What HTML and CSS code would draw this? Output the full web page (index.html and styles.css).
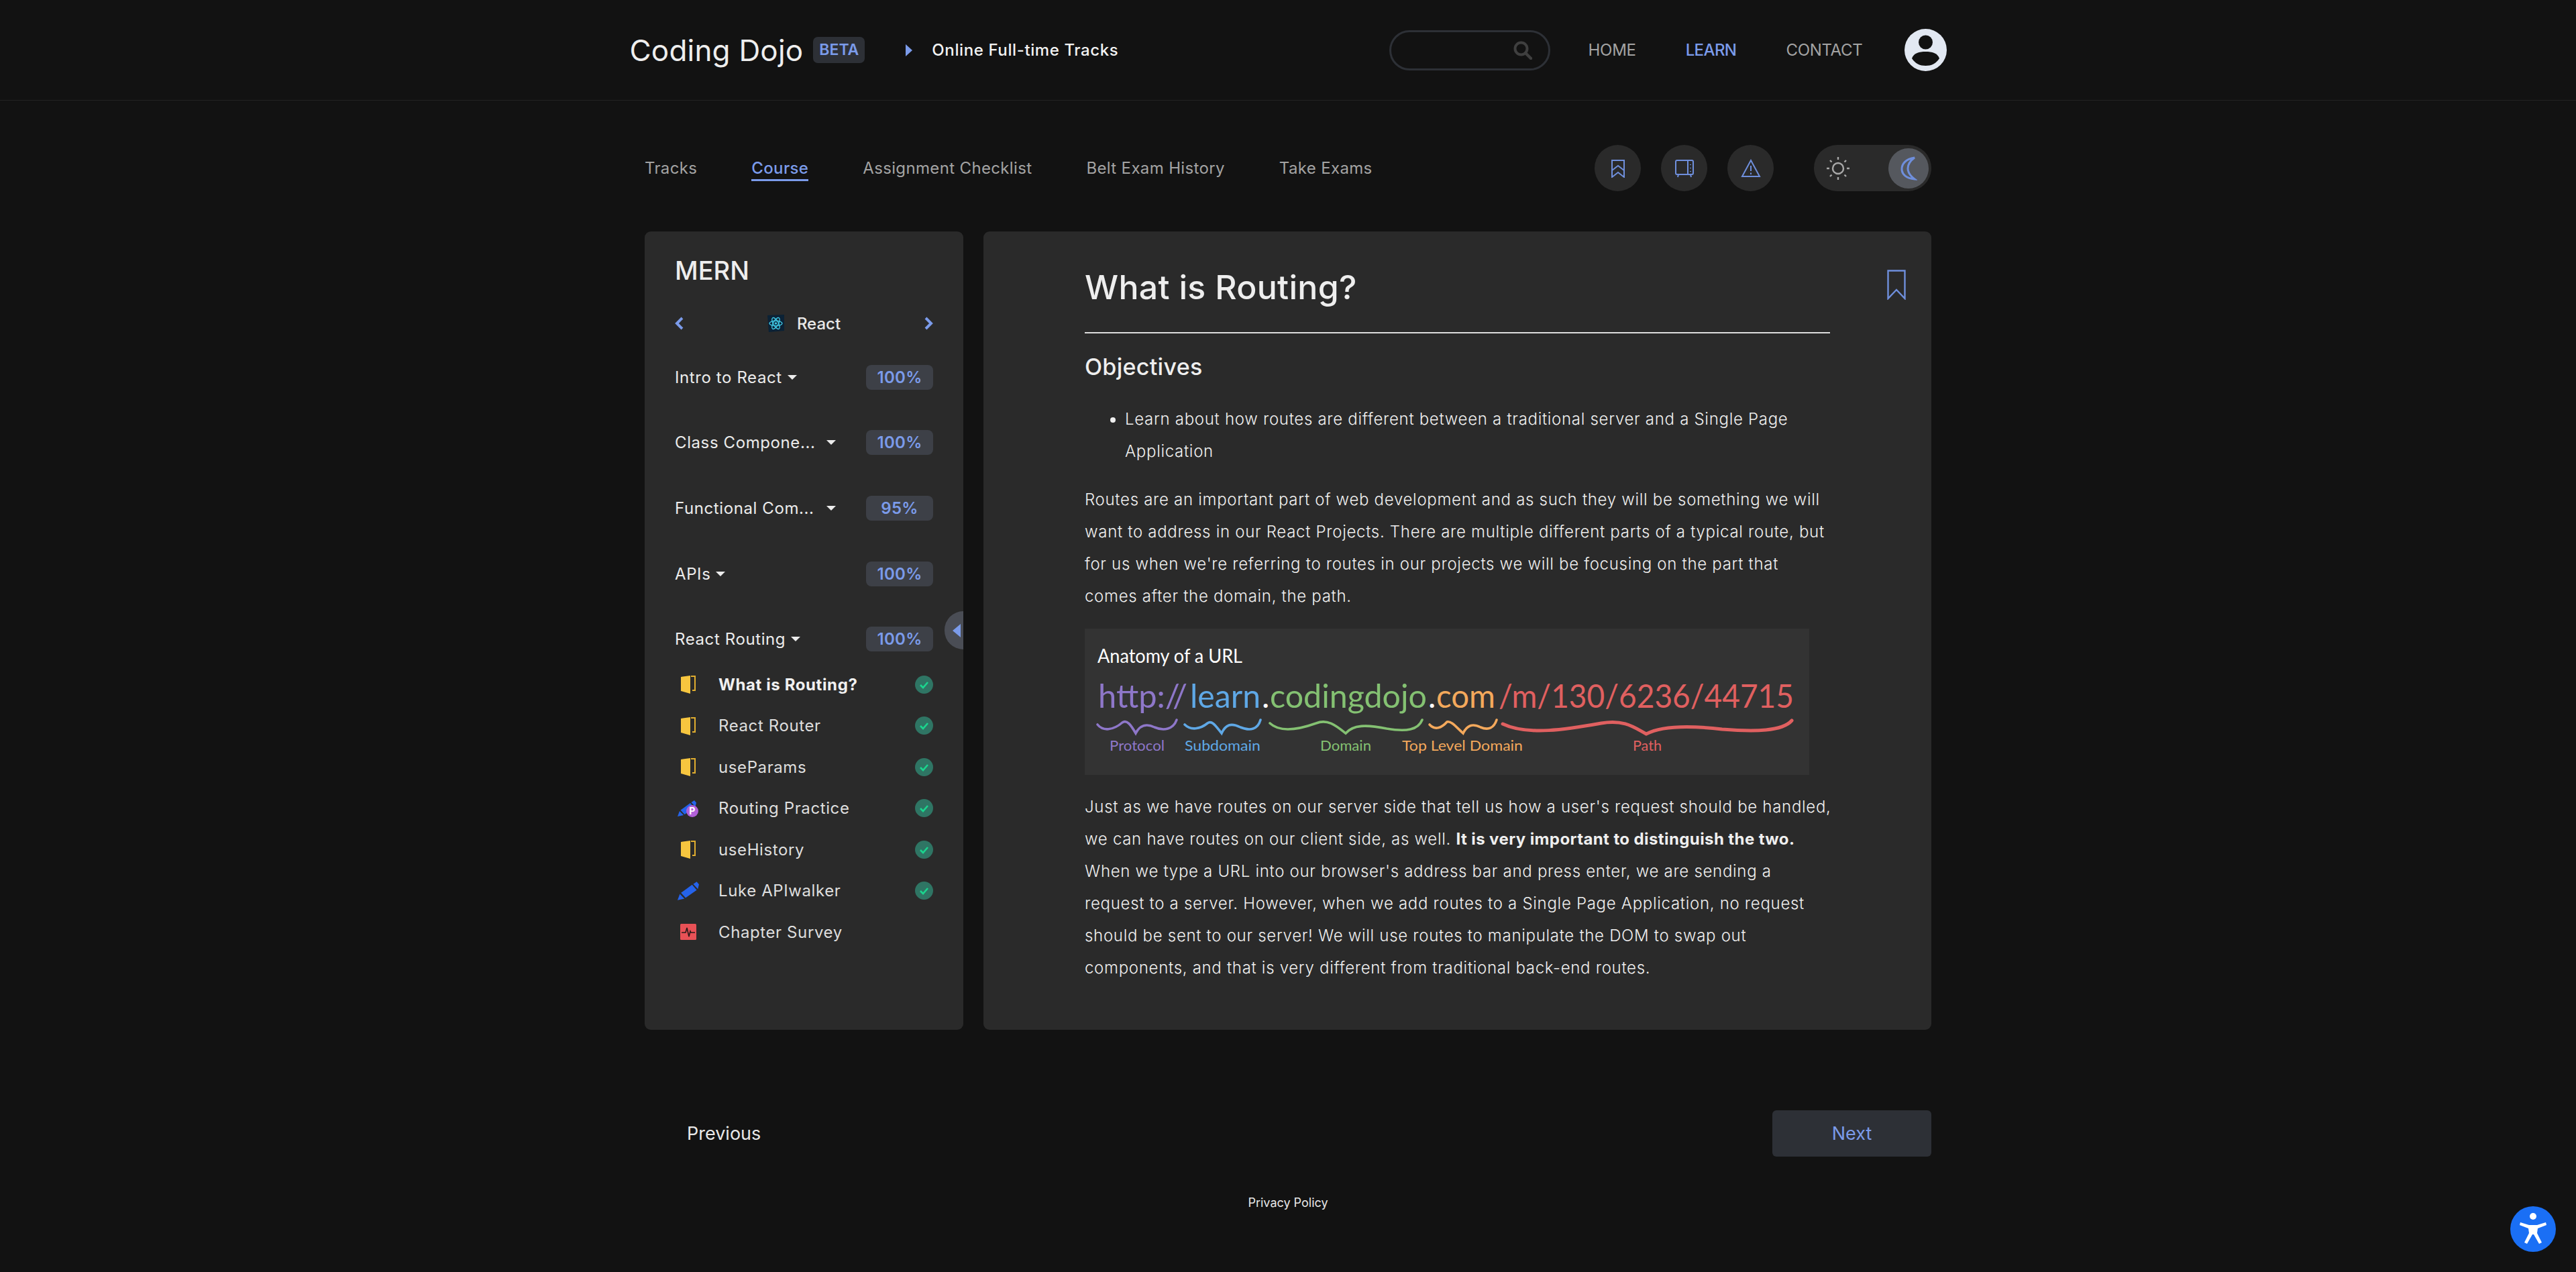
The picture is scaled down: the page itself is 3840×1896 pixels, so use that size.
FILE: index.html
```html
<!DOCTYPE html>
<html>
<head>
    <title>What is Routing? - Coding Dojo</title>
    <link rel="stylesheet" href="styles.css">
</head>
<body>
    <svg class="icon-defs" width="0" height="0">
        <defs>
            <symbol id="book" viewBox="0 0 22 28">
                <path d="M0 3 L14 1 V28 L0 24 Z" fill="#f7c63f"/>
                <path d="M15 2 H21 V23 H17" fill="none" stroke="#e0ad2f" stroke-width="2"/>
            </symbol>
            <symbol id="pencil" viewBox="0 0 28 24">
                <path d="M0 24 L3 16 L9 22 Z" fill="#2563eb"/>
                <path d="M4.5 14.5 L19 4 L25 11 L10.5 21 Z" fill="#2563eb"/>
                <path d="M20.5 3 L25 0 L28 3.5 L26.5 9.5 Z" fill="#2563eb"/>
            </symbol>
            <symbol id="check" viewBox="0 0 27 27">
                <circle cx="13.5" cy="13.5" r="13.5" fill="#2f7564"/>
                <path d="M8 14 L12 18 L19 10" fill="none" stroke="#1bd58e" stroke-width="2.6"/>
            </symbol>
        </defs>
    </svg>

    <header class="site-header">
        <div class="header-inner">
            <div class="brand">
                <span class="brand-name">Coding Dojo</span>
                <span class="beta">BETA</span>
                <span class="crumb-arrow"></span>
                <span class="crumb">Online Full-time Tracks</span>
            </div>
            <div class="search">
                <svg class="search-icon" viewBox="0 0 28 28">
                    <circle cx="11.5" cy="11.5" r="9" fill="none" stroke="#3f3f3f" stroke-width="4"/>
                    <path d="M18 18 L26 26" stroke="#3f3f3f" stroke-width="4.5" stroke-linecap="round"/>
                </svg>
            </div>
            <nav class="main-nav">
                <a href="#">HOME</a>
                <a href="#" class="active">LEARN</a>
                <a href="#">CONTACT</a>
            </nav>
            <svg class="avatar" viewBox="0 0 63 63">
                <circle cx="31.5" cy="31.5" r="31.5" fill="#e2e8f2"/>
                <circle cx="31.5" cy="20" r="10.5" fill="#121212"/>
                <path d="M11 44 C14 36 22 34 31.5 34 C41 34 49 36 52 44 C47 52 40 55 31.5 55 C23 55 16 52 11 44 Z" fill="#121212"/>
            </svg>
        </div>
    </header>

    <div class="page">
        <div class="sub-nav">
            <a href="#">Tracks</a>
            <a href="#" class="active">Course</a>
            <a href="#">Assignment Checklist</a>
            <a href="#">Belt Exam History</a>
            <a href="#">Take Exams</a>
            <div class="tools">
                <button class="round-btn">
                    <svg viewBox="0 0 24 28" width="24" height="28" fill="none" stroke="#6f8fdc" stroke-width="2">
                        <path d="M3 2 H21 V27 L12 20 L3 27 Z"/>
                        <path d="M3 17 L12 10 L21 17"/>
                    </svg>
                </button>
                <button class="round-btn">
                    <svg viewBox="0 0 30 28" width="30" height="28" fill="none" stroke="#6f8fdc" stroke-width="2">
                        <rect x="2" y="2" width="26" height="21" rx="2"/>
                        <path d="M20 2 V23 M24 8 V9 M24 13 V14 M24 18 V19 M6 23 L5 27 M24 23 L25 27"/>
                    </svg>
                </button>
                <button class="round-btn">
                    <svg viewBox="0 0 30 28" width="30" height="28" fill="none" stroke="#6f8fdc" stroke-width="2">
                        <path d="M15 2 L28 26 H2 Z"/>
                        <path d="M15 10 V18 M15 20.5 V23"/>
                    </svg>
                </button>
            </div>
            <div class="theme-toggle">
                <svg class="sun" viewBox="0 0 36 36" width="36" height="36" fill="none" stroke="#a8a8a8" stroke-width="2.4">
                    <circle cx="18" cy="18" r="8"/>
                    <path d="M18 1 V5 M18 31 V35 M1 18 H5 M31 18 H35 M6 6 L8.5 8.5 M27.5 27.5 L30 30 M6 30 L8.5 27.5 M27.5 8.5 L30 6"/>
                </svg>
                <span class="toggle-thumb">
                    <svg viewBox="0 0 26 36" width="26" height="36" fill="none" stroke="#6f8fdc" stroke-width="3">
                        <path d="M22 2 C8 4 3 12 3 19 C3 27 10 33 22 34 C14 28 12 23 12 18 C12 12 15 7 22 2 Z"/>
                    </svg>
                </span>
            </div>
        </div>

        <div class="panels">
            <aside class="sidebar">
                <h2 class="track-title">MERN</h2>
                <div class="course-switch">
                    <svg class="chev" viewBox="0 0 14 20"><path d="M11 2 L3 10 L11 18"/></svg>
                    <span class="course-name">
                        <svg viewBox="0 0 25 26" width="25" height="26">
                            <path d="M0 1 L25 0 V24 L2 26 Z" fill="#0b2236"/>
                            <g fill="none" stroke="#3fc4e0" stroke-width="1.4">
                                <ellipse cx="12.5" cy="13" rx="9.5" ry="3.8"/>
                                <ellipse cx="12.5" cy="13" rx="9.5" ry="3.8" transform="rotate(60 12.5 13)"/>
                                <ellipse cx="12.5" cy="13" rx="9.5" ry="3.8" transform="rotate(120 12.5 13)"/>
                            </g>
                            <circle cx="12.5" cy="13" r="1.8" fill="#3fc4e0"/>
                        </svg>
                        React
                    </span>
                    <svg class="chev" viewBox="0 0 14 20"><path d="M3 2 L11 10 L3 18"/></svg>
                </div>
                <div class="chapters">
                    <div class="chapter"><span class="chapter-name">Intro to React</span><span class="caret"></span><span class="percent">100%</span></div>
                    <div class="chapter"><span class="chapter-name cut">Class Compone...</span><span class="caret"></span><span class="percent">100%</span></div>
                    <div class="chapter"><span class="chapter-name cut">Functional Com...</span><span class="caret"></span><span class="percent">95%</span></div>
                    <div class="chapter"><span class="chapter-name">APIs</span><span class="caret"></span><span class="percent">100%</span></div>
                    <div class="chapter"><span class="chapter-name">React Routing</span><span class="caret"></span><span class="percent">100%</span></div>
                </div>
                <ul class="lessons">
                    <li class="current">
                        <svg class="lesson-icon"><use href="#book"/></svg>
                        <span class="lesson-name">What is Routing?</span>
                        <svg class="done"><use href="#check"/></svg>
                    </li>
                    <li>
                        <svg class="lesson-icon"><use href="#book"/></svg>
                        <span class="lesson-name">React Router</span>
                        <svg class="done"><use href="#check"/></svg>
                    </li>
                    <li>
                        <svg class="lesson-icon"><use href="#book"/></svg>
                        <span class="lesson-name">useParams</span>
                        <svg class="done"><use href="#check"/></svg>
                    </li>
                    <li>
                        <svg class="lesson-icon" viewBox="0 0 32 28">
                            <use href="#pencil" y="2" width="28" height="24"/>
                            <circle cx="22" cy="18" r="9" fill="#b160d8"/>
                            <text x="22" y="23" class="practice-p">P</text>
                        </svg>
                        <span class="lesson-name">Routing Practice</span>
                        <svg class="done"><use href="#check"/></svg>
                    </li>
                    <li>
                        <svg class="lesson-icon"><use href="#book"/></svg>
                        <span class="lesson-name">useHistory</span>
                        <svg class="done"><use href="#check"/></svg>
                    </li>
                    <li>
                        <svg class="lesson-icon"><use href="#pencil"/></svg>
                        <span class="lesson-name">Luke APIwalker</span>
                        <svg class="done"><use href="#check"/></svg>
                    </li>
                    <li>
                        <svg class="lesson-icon" viewBox="0 0 32 28">
                            <rect x="4" y="2" width="24" height="24" rx="1.5" fill="#e85156"/>
                            <path d="M6 15 H12 L14 8 L17 21 L19 13 L20 15 H26" fill="none" stroke="#2a1a1a" stroke-width="1.6"/>
                        </svg>
                        <span class="lesson-name">Chapter Survey</span>
                    </li>
                </ul>
                <span class="collapse-handle"><span class="collapse-arrow"></span></span>
            </aside>

            <main class="lesson">
                <svg class="lesson-bookmark" viewBox="0 0 28 45" fill="none" stroke="#6f8fdc" stroke-width="2.4">
                    <path d="M1.5 1.5 H26.5 V43 L14 30 L1.5 43 Z"/>
                </svg>
                <h1>What is Routing?</h1>
                <h3>Objectives</h3>
                <ul>
                    <li>Learn about how routes are different between a traditional server and a Single Page<br>Application</li>
                </ul>
                <p>Routes are an important part of web development and as such they will be something we will<br>
                want to address in our React Projects. There are multiple different parts of a typical route, but<br>
                for us when we're referring to routes in our projects we will be focusing on the part that<br>
                comes after the domain, the path.</p>
                <svg class="url-figure" viewBox="0 0 1080 218" width="1080" height="218">
                    <rect width="1080" height="218" fill="#333333"/>
                    <text x="19" y="51" class="fig-title" textLength="216" lengthAdjust="spacingAndGlyphs">Anatomy of a URL</text>
                    <g class="fig-url">
                        <text x="20" y="118" fill="#8e77c9" textLength="133" lengthAdjust="spacingAndGlyphs">http://</text>
                        <text x="157" y="118" fill="#5fa8e6" textLength="105" lengthAdjust="spacingAndGlyphs">learn</text>
                        <text x="264" y="118" fill="#ffffff">.</text>
                        <text x="276" y="118" fill="#84c172" textLength="234" lengthAdjust="spacingAndGlyphs">codingdojo</text>
                        <text x="512" y="118" fill="#ffffff">.</text>
                        <text x="524" y="118" fill="#f4a95c" textLength="88" lengthAdjust="spacingAndGlyphs">com</text>
                        <text x="617" y="118" fill="#e06060" textLength="440" lengthAdjust="spacingAndGlyphs">/m/130/6236/44715</text>
                    </g>
                    <g fill="none" stroke-width="3.6" stroke-linecap="round">
                        <path stroke="#8e77c9" d="M19 143 C27 153 42 152 56 140 C63 135 69 144 76 156 C82 144 92 141 104 147 C118 153 132 150 137 136"/>
                        <path stroke="#5fa8e6" d="M149 143 C158 152 172 150 183 141 C190 136 196 146 204 156 C210 143 218 140 232 147 C247 153 258 150 262 136"/>
                        <path stroke="#84c172" d="M276 141 C292 156 320 150 345 141 C362 134 375 145 389 156 C400 143 420 143 450 149 C480 154 497 151 503 136"/>
                        <path stroke="#f4a95c" d="M514 143 C522 152 532 148 540 139 C546 137 554 147 564 156 C570 144 578 141 590 147 C602 152 610 148 614 136"/>
                        <path stroke="#e06060" stroke-width="5" d="M623 142 C660 160 720 150 770 141 C805 135 820 148 837 157 C860 145 900 144 950 150 C1000 154 1040 153 1054 137"/>
                    </g>
                    <g class="fig-label">
                        <text x="37" y="182" fill="#8e77c9" textLength="82" lengthAdjust="spacingAndGlyphs">Protocol</text>
                        <text x="149" y="182" fill="#5fa8e6" textLength="113" lengthAdjust="spacingAndGlyphs">Subdomain</text>
                        <text x="351" y="182" fill="#84c172" textLength="76" lengthAdjust="spacingAndGlyphs">Domain</text>
                        <text x="473" y="182" fill="#f4a95c" textLength="180" lengthAdjust="spacingAndGlyphs">Top Level Domain</text>
                        <text x="817" y="182" fill="#e06060" textLength="43" lengthAdjust="spacingAndGlyphs">Path</text>
                    </g>
                </svg>
                <p>Just as we have routes on our server side that tell us how a user's request should be handled,<br>
                we can have routes on our client side, as well. <strong>It is very important to distinguish the two.</strong><br>
                When we type a URL into our browser's address bar and press enter, we are sending a<br>
                request to a server. However, when we add routes to a Single Page Application, no request<br>
                should be sent to our server! We will use routes to manipulate the DOM to swap out<br>
                components, and that is very different from traditional back-end routes.</p>
            </main>
        </div>

        <div class="pager">
            <a href="#" class="prev">Previous</a>
            <a href="#" class="next">Next</a>
        </div>
    </div>

    <footer class="site-footer"><a href="#">Privacy Policy</a></footer>

    <button class="a11y-btn">
        <svg viewBox="0 0 68 68" width="68" height="68">
            <circle cx="34" cy="34" r="34" fill="#1a6ff5"/>
            <circle cx="34" cy="15" r="5" fill="#ffffff"/>
            <path d="M15 24 L28 28 H40 L53 24 L54 28 L41 33 L40 40 L47 54 L43 56 L35 42 H33 L25 56 L21 54 L28 40 L27 33 L14 28 Z" fill="#ffffff"/>
        </svg>
    </button>
</body>
</html>
```

FILE: styles.css
```css
body {
    margin: 0;
    background-color: #121212;
    color: #e8e8e8;
    font-family: Inter, "Noto Sans", sans-serif;
    font-size: 24px;
}

a {
    color: inherit;
    text-decoration: none;
}

button {
    border: none;
    padding: 0;
    cursor: pointer;
}

.icon-defs {
    display: block;
    height: 0;
}

/* top bar */
.site-header {
    border-bottom: 1px solid #222222;
}

.header-inner {
    display: flex;
    align-items: center;
    width: 1963px;
    height: 149px;
    margin: 0 auto;
}

.brand {
    display: flex;
    align-items: center;
    flex: 1;
}

.brand-name {
    font-size: 44px;
    letter-spacing: 0.2px;
    color: #eeeeee;
}

.beta {
    margin-left: 15px;
    padding: 0 9px;
    height: 39px;
    line-height: 39px;
    background-color: #2d3036;
    border-radius: 7px;
    color: #7b9bea;
    font-size: 23px;
    font-weight: 600;
}

.crumb-arrow {
    margin-left: 61px;
    border-left: 10px solid #7b9bea;
    border-top: 9px solid transparent;
    border-bottom: 9px solid transparent;
}

.crumb {
    margin-left: 29px;
    font-size: 24px;
    font-weight: 500;
    letter-spacing: 0.6px;
    color: #f2f2f2;
}

.search {
    display: flex;
    align-items: center;
    justify-content: flex-end;
    box-sizing: border-box;
    width: 240px;
    height: 60px;
    padding-right: 24px;
    border: 3px solid #2d3036;
    border-radius: 30px;
}

.search-icon {
    width: 28px;
    height: 28px;
}

.main-nav {
    display: flex;
    gap: 74px;
    margin-left: 57px;
    color: #a3a3a3;
    font-size: 24px;
    letter-spacing: -0.3px;
}

.main-nav .active {
    color: #7b9bea;
    font-weight: 500;
    letter-spacing: -0.6px;
}

.avatar {
    width: 63px;
    height: 63px;
    margin-left: 62px;
}

/* main column */
.page {
    width: 1918px;
    margin: 0 auto;
}

.sub-nav {
    display: flex;
    align-items: center;
    height: 69px;
    margin-top: 66px;
    margin-bottom: 60px;
    color: #a3a3a3;
    letter-spacing: 0.35px;
}

.sub-nav a {
    margin-right: 81px;
    padding: 4px 0 2px;
    border-bottom: 3px solid transparent;
}

.sub-nav .active {
    color: #7b9bea;
    font-weight: 500;
    border-bottom-color: #7b9bea;
}

.tools {
    display: flex;
    gap: 30px;
    margin-left: auto;
}

.round-btn {
    display: flex;
    align-items: center;
    justify-content: center;
    width: 69px;
    height: 69px;
    border-radius: 50%;
    background-color: #2a2a2a;
}

.theme-toggle {
    display: flex;
    align-items: center;
    justify-content: space-between;
    box-sizing: border-box;
    width: 175px;
    height: 69px;
    margin-left: 60px;
    padding: 0 4px 0 18px;
    background-color: #2a2a2a;
    border-radius: 35px;
}

.toggle-thumb {
    display: flex;
    align-items: center;
    justify-content: center;
    width: 60px;
    height: 60px;
    border-radius: 50%;
    background-color: #55585e;
}

.panels {
    display: flex;
    gap: 30px;
    height: 1190px;
}

/* left panel */
.sidebar {
    position: relative;
    box-sizing: border-box;
    width: 475px;
    padding: 30px 45px 0 45px;
    background-color: #2a2a2a;
    border-radius: 9px;
    letter-spacing: 0.6px;
}

.track-title {
    margin: 0;
    font-size: 38px;
    font-weight: 500;
    line-height: 56px;
    letter-spacing: 0;
    color: #eeeeee;
}

.course-switch {
    display: flex;
    align-items: center;
    justify-content: space-between;
    height: 40px;
    margin-top: 31px;
    margin-bottom: 41.5px;
}

.chev {
    width: 14px;
    height: 20px;
    fill: none;
    stroke: #7b9bea;
    stroke-width: 4;
}

.course-name {
    display: flex;
    align-items: center;
    gap: 19px;
    font-weight: 500;
    letter-spacing: 0;
}

.chapters {
    display: flex;
    flex-direction: column;
    gap: 60.7px;
}

.chapter {
    display: flex;
    align-items: center;
    height: 37px;
}

.chapter-name {
    color: #ececec;
}

.chapter-name.cut {
    width: 206px;
    white-space: nowrap;
    margin-right: 12px;
}

.caret {
    margin-left: 8px;
    border-top: 7px solid #ececec;
    border-left: 7px solid transparent;
    border-right: 7px solid transparent;
}

.percent {
    width: 100px;
    height: 37px;
    margin-left: auto;
    line-height: 37px;
    text-align: center;
    background-color: #3d4047;
    border-radius: 8px;
    color: #7b9bea;
    font-weight: 600;
    letter-spacing: 0.3px;
}

.lessons {
    list-style: none;
    margin: 18px 0 0;
    padding: 0;
}

.lessons li {
    display: flex;
    align-items: center;
    height: 61.5px;
}

.lesson-icon {
    width: 32px;
    height: 28px;
    margin-left: 4px;
    flex-shrink: 0;
}

.lesson-name {
    flex: 1;
    margin-left: 29px;
    color: #dedede;
}

.current .lesson-name {
    font-weight: 700;
    color: #f0f0f0;
}

.done {
    width: 27px;
    height: 27px;
}

.practice-p {
    fill: #ffffff;
    font-size: 14px;
    font-weight: 700;
    text-anchor: middle;
}

.collapse-handle {
    position: absolute;
    top: 566px;
    right: 0;
    display: flex;
    align-items: center;
    width: 28px;
    height: 57px;
    background-color: #4a4d55;
    border-radius: 29px 0 0 29px;
}

.collapse-arrow {
    margin-left: 12px;
    border-right: 12px solid #7b9bea;
    border-top: 10px solid transparent;
    border-bottom: 10px solid transparent;
}

/* lesson text */
.lesson {
    position: relative;
    flex: 1;
    padding: 50px 0 0 151px;
    background-color: #2a2a2a;
    border-radius: 9px;
}

.lesson-bookmark {
    position: absolute;
    top: 57px;
    right: 38px;
    width: 28px;
    height: 45px;
}

.lesson h1 {
    width: 1111px;
    height: 100px;
    margin: 0;
    border-bottom: 2px solid #dddddd;
    font-size: 50px;
    font-weight: 500;
    line-height: 66px;
    letter-spacing: 0.3px;
    color: #eeeeee;
}

.lesson h3 {
    margin: 26px 0 0;
    font-size: 34px;
    font-weight: 500;
    line-height: 48px;
    letter-spacing: 0.3px;
    color: #eeeeee;
}

.lesson ul {
    margin: 30px 0 0;
    padding-left: 60px;
}

.lesson li,
.lesson p {
    font-size: 24px;
    font-weight: 300;
    line-height: 48px;
    letter-spacing: 0.7px;
    white-space: nowrap;
    color: #efefef;
}

.lesson p {
    margin: 24px 0 0;
}

.lesson strong {
    font-weight: 700;
    letter-spacing: 0.4px;
}

.url-figure {
    display: block;
    margin: 24px 0 0;
}

.fig-title {
    fill: #ffffff;
    font-family: Lato, sans-serif;
    font-size: 28px;
}

.fig-url {
    font-family: Lato, sans-serif;
    font-size: 48px;
}

.fig-label {
    font-family: Lato, sans-serif;
    font-size: 21px;
}

/* bottom */
.pager {
    display: flex;
    align-items: center;
    justify-content: space-between;
    margin-top: 120px;
    font-size: 27px;
}

.prev {
    margin-left: 63px;
}

.next {
    width: 237px;
    height: 69px;
    line-height: 69px;
    text-align: center;
    background-color: #2d3036;
    border-radius: 6px;
    color: #7b9bea;
}

.site-footer {
    margin-top: 56px;
    text-align: center;
    font-size: 18px;
    line-height: 26px;
}

.a11y-btn {
    position: fixed;
    right: 30px;
    bottom: 30px;
    width: 68px;
    height: 68px;
    background: none;
}
```
